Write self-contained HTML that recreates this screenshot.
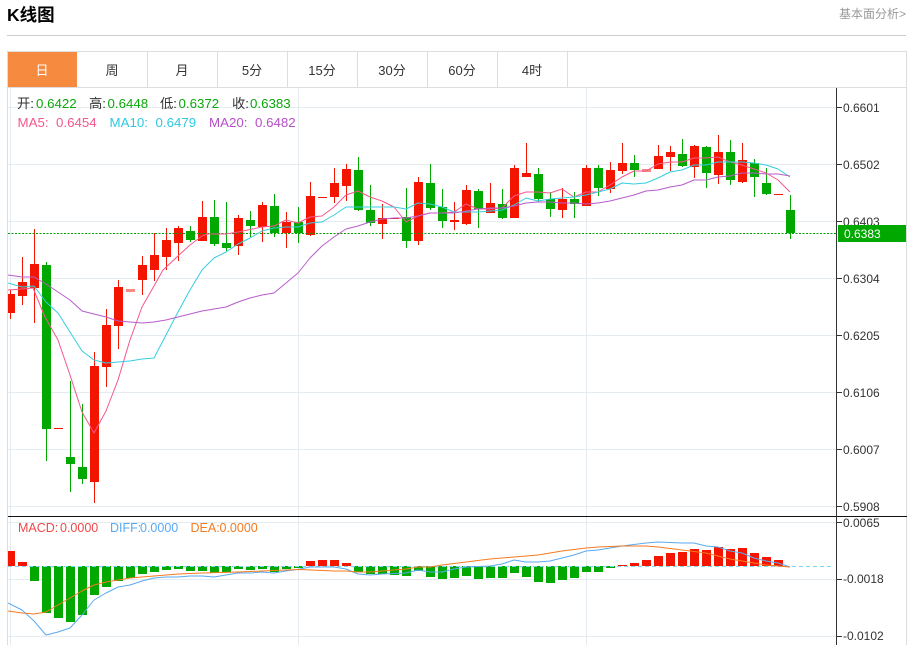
<!DOCTYPE html>
<html><head><meta charset="utf-8"><style>
html,body{margin:0;padding:0;background:#fff}
body{width:912px;height:645px;overflow:hidden;position:relative}
svg{position:absolute;left:0;top:0;font-family:"Liberation Sans","Noto Sans CJK SC",sans-serif}
</style></head><body>
<svg width="912" height="645" viewBox="0 0 912 645" xmlns="http://www.w3.org/2000/svg">
<defs><clipPath id="c"><rect x="8" y="88" width="828" height="428"/></clipPath><clipPath id="d"><rect x="8" y="517" width="828" height="128"/></clipPath></defs>
<text x="7" y="21" font-size="17.5" font-weight="bold" fill="#000">K线图</text>
<text x="906" y="18" font-size="12" fill="#999" text-anchor="end">基本面分析&gt;</text>
<rect x="7" y="35" width="899" height="1" fill="#ccc"/>
<g fill="#ddd" shape-rendering="crispEdges">
<rect x="7" y="51" width="900" height="1"/>
<rect x="7" y="87" width="900" height="1"/>
<rect x="7" y="51" width="1" height="594"/>
<rect x="906" y="51" width="1" height="594"/>
<rect x="147" y="52" width="1" height="35"/><rect x="217" y="52" width="1" height="35"/><rect x="287" y="52" width="1" height="35"/><rect x="357" y="52" width="1" height="35"/><rect x="427" y="52" width="1" height="35"/><rect x="497" y="52" width="1" height="35"/><rect x="567" y="52" width="1" height="35"/>
</g>
<rect x="8" y="52" width="69" height="35" fill="#f68b3f"/>
<g font-size="13" text-anchor="middle" fill="#333">
<text x="42" y="75" fill="#fff">日</text><text x="112" y="75">周</text><text x="182" y="75">月</text><text x="252" y="75">5分</text><text x="322" y="75">15分</text><text x="392" y="75">30分</text><text x="462" y="75">60分</text><text x="532" y="75">4时</text>
</g>
<g fill="#e4ecf2" shape-rendering="crispEdges">
<rect x="8" y="107" width="828" height="1"/><rect x="8" y="164" width="828" height="1"/><rect x="8" y="221" width="828" height="1"/><rect x="8" y="278" width="828" height="1"/><rect x="8" y="335" width="828" height="1"/><rect x="8" y="392" width="828" height="1"/><rect x="8" y="449" width="828" height="1"/><rect x="8" y="506" width="828" height="1"/>
<rect x="8" y="522" width="828" height="1"/><rect x="8" y="579" width="828" height="1"/><rect x="8" y="636" width="828" height="1"/>
<rect x="10" y="88" width="1" height="557"/><rect x="298" y="88" width="1" height="557"/><rect x="586" y="88" width="1" height="557"/>
</g>
<g clip-path="url(#c)" shape-rendering="crispEdges">
<path fill="none" stroke="#f41500" stroke-width="1" d="M10.5 290V319M22.5 257V305M34.5 229V323M94.5 352V503M106.5 309V387M118.5 280V349M142.5 256V295M154.5 233V281M166.5 228V270M178.5 226V261M202.5 201V241M238.5 215V255M262.5 202V242M286.5 212V248M310.5 182V236M334.5 168V203M346.5 164V201M382.5 204V239M418.5 177V245M454.5 202V230M466.5 185V225M490.5 183V213M514.5 165V218M526.5 143V177M562.5 188V218M586.5 165V206M610.5 162V193M622.5 143V174M658.5 145V169M670.5 146V171M694.5 145V178M718.5 135V184M742.5 143V183"/>
<path fill="none" stroke="#00a800" stroke-width="1" d="M46.5 262V461M70.5 381V492M82.5 404V484M190.5 226V242M214.5 200V246M226.5 202V251M250.5 211V237M274.5 194V237M298.5 207V243M358.5 157V211M370.5 185V226M406.5 188V248M430.5 164V210M442.5 189V228M478.5 189V228M502.5 189V219M538.5 168V202M550.5 192V217M574.5 192V218M598.5 165V196M634.5 155V177M682.5 139V167M706.5 146V188M730.5 140V185M754.5 159V197M766.5 168V195M790.5 195V239"/>
<path fill="#f41500" d="M6 294h9v19h-9zM18 282h9v14h-9zM30 264h9v24h-9zM54 428h9v1h-9zM90 366h9v116h-9zM102 325h9v42h-9zM114 287h9v39h-9zM138 265h9v15h-9zM150 255h9v15h-9zM162 240h9v17h-9zM174 228h9v15h-9zM198 217h9v24h-9zM234 218h9v28h-9zM258 205h9v22h-9zM282 222h9v11h-9zM306 196h9v39h-9zM318 197h9v1h-9zM330 183h9v14h-9zM342 169h9v17h-9zM378 218h9v6h-9zM390 218h9v1h-9zM414 182h9v59h-9zM450 220h9v2h-9zM462 190h9v34h-9zM486 203h9v10h-9zM510 168h9v50h-9zM522 173h9v4h-9zM558 199h9v11h-9zM582 168h9v38h-9zM606 170h9v19h-9zM618 163h9v8h-9zM654 156h9v13h-9zM666 152h9v5h-9zM690 146h9v21h-9zM714 152h9v23h-9zM738 160h9v22h-9zM774 194h9v1h-9z"/>
<path fill="#f88a80" d="M126 289h9v3h-9zM642 169h9v3h-9z"/>
<path fill="#00a800" d="M42 265h9v164h-9zM66 457h9v7h-9zM78 467h9v12h-9zM186 231h9v9h-9zM210 217h9v27h-9zM222 243h9v5h-9zM246 220h9v6h-9zM270 206h9v27h-9zM294 222h9v11h-9zM354 170h9v40h-9zM366 210h9v13h-9zM402 217h9v24h-9zM426 183h9v25h-9zM438 207h9v14h-9zM474 191h9v18h-9zM498 204h9v14h-9zM534 174h9v25h-9zM546 199h9v10h-9zM570 199h9v5h-9zM594 168h9v20h-9zM630 163h9v7h-9zM678 154h9v12h-9zM702 147h9v26h-9zM726 152h9v28h-9zM750 163h9v14h-9zM762 183h9v11h-9zM786 210h9v23h-9z"/>
</g>
<line x1="8" y1="233.5" x2="836" y2="233.5" stroke="#00a000" stroke-dasharray="2 1.5" shape-rendering="crispEdges"/>
<g clip-path="url(#c)" fill="none" stroke-linejoin="round">
<polyline stroke="#f5578e" points="8,290 22,289 33,288 45,317 58,340 70,375 82,412 94,433 106,411 118,380 130,340 142,307 154,286 163,270 178,256 190,245 202,236 208,234 226,234 238,232 262,227 274,226 286,220 298,223 310,217 322,216 334,207 346,195 358,191 370,197 382,201 394,207 406,222 418,216 430,213 442,213 454,212 466,204 478,209 490,209 502,208 514,196 526,192 538,192 550,193 562,189 574,197 586,192 598,192 610,185 622,177 634,171 646,171 658,164 670,162 682,162 694,158 706,158 718,157 730,162 742,165 754,169 766,173 778,180 790,192"/>
<polyline stroke="#36cde0" points="8,283 22,287 34,286 46,302 58,313 70,332 82,351 94,360 106,363 118,362 130,361 142,359 154,358 166,335 178,312 190,290 202,270 214,258 226,252 238,244 250,238 262,231 274,228 286,227 298,227 310,223 322,222 334,215 346,207 358,207 370,207 382,207 394,207 406,209 418,203 430,204 442,207 454,212 466,212 478,212 490,211 502,210 514,205 526,198 538,201 550,199 562,198 574,197 586,195 598,192 610,189 622,183 634,184 646,183 658,178 670,172 682,170 694,165 706,165 718,162 730,162 742,162 754,163 766,165 778,169 790,177"/>
<polyline stroke="#b85ccb" points="8,275 22,277 34,277 46,284 58,292 70,300 82,311 94,314 106,317 118,321 130,322 142,323 154,322 166,320 178,317 190,314 202,311 214,309 226,307 238,302 250,298 262,295 274,293 286,283 298,273 310,258 322,246 334,237 346,229 358,226 370,222 382,219 394,218 406,218 418,216 430,213 442,213 454,213 466,211 478,209 490,208 502,208 514,206 526,203 538,202 550,202 562,203 574,203 586,204 598,203 610,201 622,198 634,195 646,191 658,190 670,187 682,185 694,180 706,180 718,177 730,176 742,173 754,173 766,174 778,174 790,176"/>
</g>
<g clip-path="url(#d)" shape-rendering="crispEdges">
<path fill="#f41500" d="M8 551h7v15h-7zM18 562h9v4h-9zM306 561h9v5h-9zM318 560h9v6h-9zM330 560h9v6h-9zM342 563h9v3h-9zM618 565h9v1h-9zM630 563h9v3h-9zM642 560h9v6h-9zM654 556h9v10h-9zM666 553h9v13h-9zM678 552h9v14h-9zM690 549h9v17h-9zM702 550h9v16h-9zM714 547h9v19h-9zM726 549h9v17h-9zM738 548h9v18h-9zM750 553h9v13h-9zM762 557h9v9h-9zM774 560h9v6h-9z"/>
<path fill="#00a800" d="M30 566h9v15h-9zM42 566h9v47h-9zM54 566h9v52h-9zM66 566h9v56h-9zM78 566h9v49h-9zM90 566h9v29h-9zM102 566h9v21h-9zM114 566h9v15h-9zM126 566h9v12h-9zM138 566h9v8h-9zM150 566h9v6h-9zM162 566h9v4h-9zM174 566h9v3h-9zM186 566h9v5h-9zM198 566h9v5h-9zM210 566h9v7h-9zM222 566h9v6h-9zM234 566h9v3h-9zM246 566h9v4h-9zM258 566h9v3h-9zM270 566h9v6h-9zM282 566h9v3h-9zM294 566h9v2h-9zM354 566h9v6h-9zM366 566h9v8h-9zM378 566h9v8h-9zM390 566h9v9h-9zM402 566h9v10h-9zM414 566h9v5h-9zM426 566h9v11h-9zM438 566h9v13h-9zM450 566h9v12h-9zM462 566h9v10h-9zM474 566h9v13h-9zM486 566h9v12h-9zM498 566h9v12h-9zM510 566h9v7h-9zM522 566h9v11h-9zM534 566h9v16h-9zM546 566h9v17h-9zM558 566h9v14h-9zM570 566h9v12h-9zM582 566h9v6h-9zM594 566h9v6h-9zM606 566h9v2h-9z"/>
</g>
<line x1="8" y1="566.5" x2="834" y2="566.5" stroke="#7fd6ee" stroke-dasharray="4 3" shape-rendering="crispEdges"/>
<g clip-path="url(#d)" fill="none" stroke-linejoin="round">
<polyline stroke="#5aaaf0" points="8,603 22,610 34,621 46,635 58,632 70,628 82,615 94,600 106,593 118,587 130,585 142,581 154,578 166,577 178,577 190,576 202,576 214,577 226,575 238,573 250,573 262,572 274,573 286,571 300,569 310,567 334,567 346,569 358,574 370,575 382,574 406,573 418,570 430,572 442,572 454,569 466,567 490,566 502,564 514,560 526,562 538,562 550,561 562,558 574,555 586,551 598,550 622,546 646,543 658,542 682,543 694,543 706,546 718,547 730,551 742,553 754,558 766,561 778,563 790,567"/>
<polyline stroke="#f57a20" points="8,611 22,613 34,614 46,612 58,605 70,598 82,591 94,585 106,582 118,580 130,578 142,577 154,576 166,575 178,574 202,573 238,572 262,571 286,570 300,569.5 334,571 346,571 358,572 370,572 394,570 406,569 418,567 430,567 442,565 466,562 490,559 514,557 538,555 550,553 562,551 586,548 598,547 622,546 646,546 658,547 682,550 706,553 730,559 742,561 754,563 766,565 790,567"/>
</g>
<g font-size="13.3">
<text x="17" y="108" fill="#333">开:</text><text x="36" y="108" fill="#0aa80a">0.6422</text>
<text x="89" y="108" fill="#333">高:</text><text x="107.500" y="108" fill="#0aa80a">0.6448</text>
<text x="160" y="108" fill="#333">低:</text><text x="178.500" y="108" fill="#0aa80a">0.6372</text>
<text x="232" y="108" fill="#333">收:</text><text x="250" y="108" fill="#0aa80a">0.6383</text>
<text x="17.500" y="127" fill="#f5578e">MA5:</text><text x="56" y="127" fill="#f5578e">0.6454</text>
<text x="109.500" y="127" fill="#30c8e0">MA10:</text><text x="155.500" y="127" fill="#30c8e0">0.6479</text>
<text x="209" y="127" fill="#b650c8">MA20:</text><text x="255" y="127" fill="#b650c8">0.6482</text>
</g>
<g font-size="12.500">
<text x="18" y="532" fill="#f04848">MACD:</text><text x="60" y="532" fill="#f04848">0.0000</text>
<text x="110" y="532" fill="#5aaaf0">DIFF:</text><text x="140" y="532" fill="#5aaaf0">0.0000</text>
<text x="190.500" y="532" fill="#f57a20">DEA:</text><text x="219.500" y="532" fill="#f57a20">0.0000</text>
</g>
<rect x="8" y="516" width="899" height="1" fill="#111"/>
<rect x="836" y="88" width="1" height="557" fill="#333"/>
<g fill="#333" shape-rendering="crispEdges">
<rect x="837" y="107" width="5" height="1"/><rect x="837" y="164" width="5" height="1"/><rect x="837" y="221" width="5" height="1"/><rect x="837" y="278" width="5" height="1"/><rect x="837" y="335" width="5" height="1"/><rect x="837" y="392" width="5" height="1"/><rect x="837" y="449" width="5" height="1"/><rect x="837" y="506" width="5" height="1"/><rect x="837" y="522" width="5" height="1"/><rect x="837" y="579" width="5" height="1"/><rect x="837" y="636" width="5" height="1"/>
</g>
<g font-size="12" fill="#333">
<text x="843" y="112">0.6601</text><text x="843" y="169">0.6502</text><text x="843" y="226">0.6403</text><text x="843" y="283">0.6304</text><text x="843" y="340">0.6205</text><text x="843" y="397">0.6106</text><text x="843" y="454">0.6007</text><text x="843" y="511">0.5908</text>
<text x="843" y="527">0.0065</text><text x="843" y="583">-0.0018</text><text x="843" y="640">-0.0102</text>
</g>
<rect x="838" y="225" width="68" height="17" fill="#00a800"/>
<text x="844" y="238" font-size="12" fill="#fff">0.6383</text>
</svg>
</body></html>
